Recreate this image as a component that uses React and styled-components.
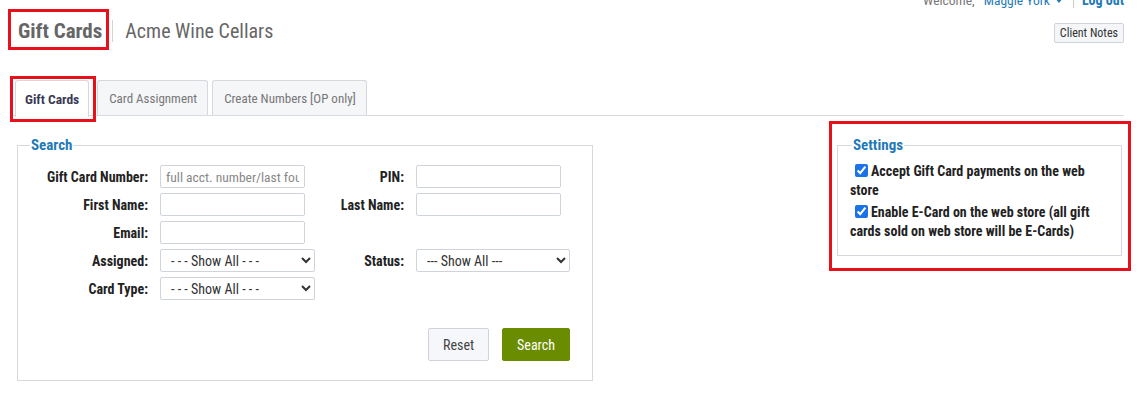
import React from "react";
import styled, { createGlobalStyle } from "styled-components";

const GlobalStyle = createGlobalStyle`
  body {
    margin: 0;
    background: #fff;
    font-family: "Roboto Condensed", "Roboto", "Liberation Sans", sans-serif;
    font-stretch: 75%;
    color: #333;
    overflow: hidden;
  }
  input, select, button {
    font-stretch: 75%;
  }
`;

const Page = styled.div`
  padding: 0 21px 0 8px;
  width: 1145px;
  box-sizing: border-box;
`;

const TopBar = styled.div`
  display: flex;
  justify-content: flex-end;
  align-items: center;
  gap: 9px;
  height: 18px;
  margin-top: -9px;
  font-size: 13.5px;
`;

const Muted = styled.span`
  color: #777;
`;

const UserLink = styled.span`
  color: #1f7ab8;
  display: inline-flex;
  align-items: center;
  gap: 5px;
  padding-right: 10px;
  border-right: 1px solid #ccc;
  margin-right: -1px;
`;

const Caret = styled.span`
  width: 0;
  height: 0;
  border-left: 4px solid transparent;
  border-right: 4px solid transparent;
  border-top: 5px solid #1f7ab8;
`;

const LogOut = styled.span`
  color: #1f7ab8;
  font-weight: bold;
  font-size: 14px;
`;

const Header = styled.div`
  display: flex;
  align-items: flex-start;
`;

const Marked = styled.div`
  border: 3px solid #e8101a;
  box-sizing: border-box;
`;

const TitleBox = styled(Marked)`
  height: 41px;
  display: flex;
  align-items: center;
  padding: 2px 4px 0 7px;
`;

const Title = styled.h1`
  margin: 0;
  font-size: 21px;
  font-weight: bold;
  color: #666;
`;

const Client = styled.div`
  display: flex;
  align-items: center;
  height: 41px;
  padding-top: 2px;
  box-sizing: border-box;
  margin-left: 3px;
`;

const Divider = styled.span`
  width: 1px;
  height: 22px;
  background: #d4d4d4;
  margin-right: 12px;
`;

const ClientName = styled.span`
  font-size: 20px;
  color: #666;
`;

const NotesButton = styled.button`
  margin-left: auto;
  margin-top: 14px;
  height: 20px;
  padding: 0 5px;
  font-family: inherit;
  font-size: 12px;
  color: #333;
  background: #f5f6f8;
  border: 1px solid #cfd3da;
  border-radius: 2px;
`;

const TabBar = styled.div`
  display: flex;
  align-items: flex-end;
  margin-top: 30px;
  margin-left: 2px;
  border-bottom: 1px solid #d8dbe0;
  height: 35px;
`;

const ActiveWrap = styled(Marked)`
  padding: 1px 0 0 2px;
  height: 46px;
  margin-bottom: -7px;
  margin-right: 1px;
  align-self: flex-end;
  display: flex;
`;

const Tab = styled.div`
  height: ${({ $active }) => ($active ? "37px" : "35px")};
  box-sizing: border-box;
  padding: ${({ $active }) => ($active ? "0 9px" : "0 10px 0 11px")};
  display: flex;
  align-items: center;
  font-size: ${({ $active }) => ($active ? "13.5px" : "13px")};
  font-weight: ${({ $active }) => ($active ? "bold" : "normal")};
  color: ${({ $active }) => ($active ? "#3b3a55" : "#777")};
  background: ${({ $active }) => ($active ? "#fff" : "#f5f6f8")};
  border: 1px solid #d5d8dd;
  border-bottom: none;
  border-radius: 3px 3px 0 0;
  margin-right: 4px;
  white-space: nowrap;
`;

const Content = styled.div`
  display: flex;
  align-items: flex-start;
  margin-top: 3px;
`;

const Fieldset = styled.fieldset`
  margin: 0;
  border: 1px solid #d5d8dd;
  padding: ${({ $pad }) => $pad};
  box-sizing: border-box;
  min-width: 0;
`;

const Legend = styled.legend`
  font-size: 15px;
  font-weight: bold;
  color: #1f7ab8;
  padding: 0 1px;
  margin-left: 2px;
`;

const SearchSet = styled(Fieldset)`
  width: 576px;
  margin-left: 9px;
  margin-top: 17px;
`;

const Grid = styled.div`
  display: grid;
  grid-template-columns: 120px 155px 77px 155px;
  column-gap: 12px;
  row-gap: 5px;
  align-items: center;
`;

const Label = styled.label`
  text-align: right;
  font-size: 14px;
  font-weight: bold;
  color: #222;
  white-space: nowrap;
`;

const Input = styled.input`
  width: 145px;
  height: 23px;
  box-sizing: border-box;
  border: 1px solid #cfd3da;
  border-radius: 2px;
  padding: 0 5px;
  font-family: inherit;
  font-size: 13.5px;
  &::placeholder {
    color: #888;
  }
`;

const Select = styled.select`
  width: ${({ $w }) => $w || 155}px;
  height: 23px;
  box-sizing: border-box;
  border: 1px solid #cfd3da;
  border-radius: 2px;
  background: #fff;
  font-family: inherit;
  font-size: 14px;
  color: #333;
  padding: 0 6px;
`;

const Empty = styled.div`
  height: 23px;
`;

const Actions = styled.div`
  display: flex;
  justify-content: flex-end;
  gap: 13px;
  margin-top: 28px;
  margin-right: 12px;
`;

const Button = styled.button`
  height: 33px;
  padding: 0 14px;
  font-family: inherit;
  font-size: 14px;
  border-radius: 2px;
  color: ${({ $primary }) => ($primary ? "#fff" : "#444")};
  background: ${({ $primary }) => ($primary ? "#6a8c00" : "#f5f7fa")};
  border: 1px solid ${({ $primary }) => ($primary ? "#6a8c00" : "#d0d4da")};
`;

const SettingsWrap = styled(Marked)`
  margin-left: auto;
  margin-top: 2px;
  margin-right: -7px;
  width: 302px;
  padding: 12px 6px 12px 5px;
`;

const SettingsSet = styled(Fieldset)`
  width: 100%;
`;

const Check = styled.label`
  display: block;
  font-size: 14px;
  font-weight: bold;
  color: #222;
  line-height: 19px;
  margin-bottom: 3px;
  input {
    width: 13px;
    height: 13px;
    margin: 0 3px 0 5px;
    vertical-align: -1px;
    accent-color: #1a73e8;
  }
`;

const fields = [
  ["Gift Card Number:", <Input key="a" placeholder="full acct. number/last four" />, "PIN:", <Input key="b" />],
  ["First Name:", <Input key="c" />, "Last Name:", <Input key="d" />],
  ["Email:", <Input key="e" />, null, null],
  [
    "Assigned:",
    <Select key="f" defaultValue="all"><option value="all">- - - Show All - - -</option></Select>,
    "Status:",
    <Select key="g" $w={154} defaultValue="all"><option value="all">--- Show All ---</option></Select>,
  ],
  ["Card Type:", <Select key="h" defaultValue="all"><option value="all">- - - Show All - - -</option></Select>, null, null],
];

export default function App() {
  return (
    <>
      <GlobalStyle />
      <Page>
        <TopBar>
          <Muted>Welcome,</Muted>
          <UserLink>
            Maggie York <Caret />
          </UserLink>
          <LogOut>Log out</LogOut>
        </TopBar>
        <Header>
          <TitleBox>
            <Title>Gift Cards</Title>
          </TitleBox>
          <Client>
            <Divider />
            <ClientName>Acme Wine Cellars</ClientName>
          </Client>
          <NotesButton>Client Notes</NotesButton>
        </Header>
        <TabBar>
          <ActiveWrap>
            <Tab $active>Gift Cards</Tab>
          </ActiveWrap>
          <Tab>Card Assignment</Tab>
          <Tab>Create Numbers [OP only]</Tab>
        </TabBar>
        <Content>
          <SearchSet $pad="11px 10px 19px 10px">
            <Legend>Search</Legend>
            <Grid>
              {fields.map(([l1, c1, l2, c2]) => (
                <React.Fragment key={l1}>
                  <Label>{l1}</Label>
                  {c1}
                  {l2 ? <Label>{l2}</Label> : <Empty />}
                  {c2 || <Empty />}
                </React.Fragment>
              ))}
            </Grid>
            <Actions>
              <Button>Reset</Button>
              <Button $primary>Search</Button>
            </Actions>
          </SearchSet>
          <SettingsWrap>
            <SettingsSet $pad="8px 10px 11px 12px">
              <Legend>Settings</Legend>
              <Check>
                <input type="checkbox" defaultChecked />
                Accept Gift Card payments on the web store
              </Check>
              <Check>
                <input type="checkbox" defaultChecked />
                Enable E-Card on the web store (all gift cards sold on web store will be E-Cards)
              </Check>
            </SettingsSet>
          </SettingsWrap>
        </Content>
      </Page>
    </>
  );
}
